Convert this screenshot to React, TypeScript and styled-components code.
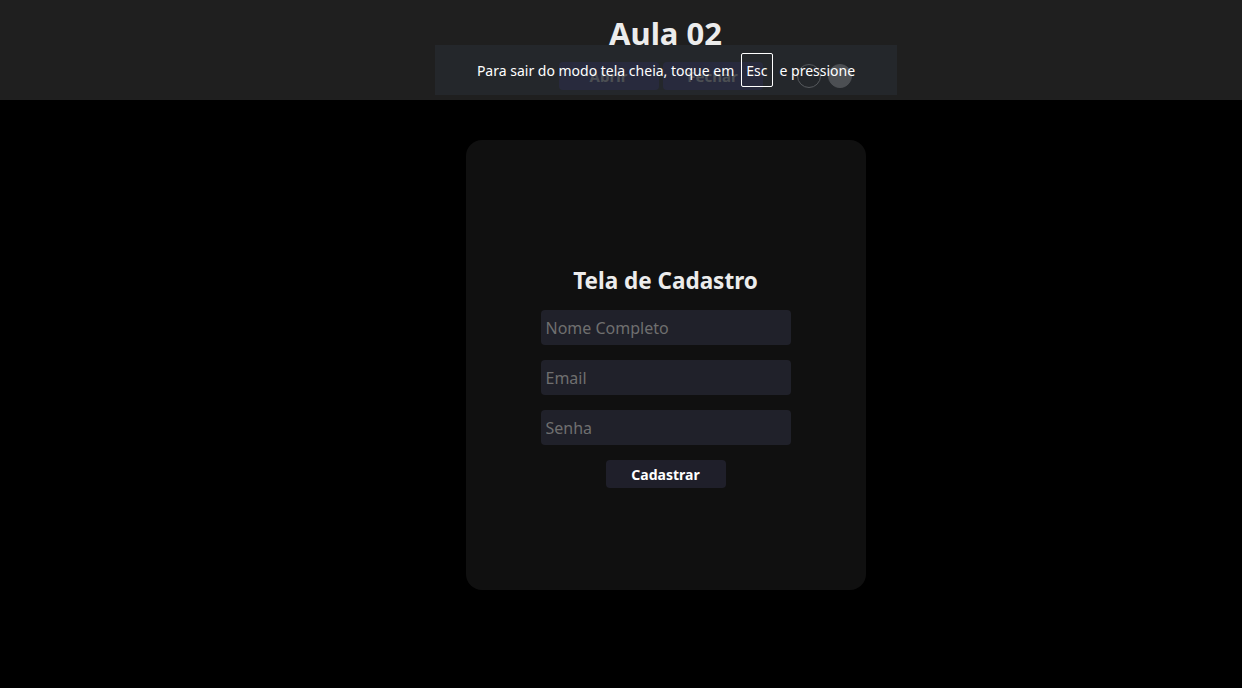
import styled, { createGlobalStyle } from 'styled-components'

const GlobalStyle = createGlobalStyle`
	html, body {
		margin: 0;
		padding: 0;
		background: #000;
		font-family: 'Noto Sans', 'Open Sans', sans-serif;
	}
	* {
		box-sizing: border-box;
	}
`

const Page = styled.div`
	position: relative;
	width: 1242px;
	height: 688px;
	overflow: hidden;
	background: #000;
`

const Header = styled.header`
	height: 100px;
	background: #1f1f1f;
	display: flex;
	flex-direction: column;
	align-items: center;
	padding-left: 89px;
	padding-top: 12px;
`

const Title = styled.h1`
	margin: 0;
	font-size: 31px;
	line-height: 42px;
	font-weight: 700;
	color: #ececec;
`

const Controls = styled.div`
	display: flex;
	align-items: center;
	gap: 4px;
	margin-top: 8px;
	margin-left: 79px;
`

const HeaderButton = styled.button`
	width: 100px;
	height: 28px;
	border: none;
	border-radius: 4px;
	background: #2c2a66;
	color: #bcbcbc;
	font-family: inherit;
	font-size: 15px;
	font-weight: 700;
`

const Circle = styled.span<{ $filled?: boolean }>`
	width: 24px;
	height: 24px;
	border-radius: 50%;
	margin-left: ${(p) => (p.$filled ? '3px' : '30px')};
	border: 1px solid ${(p) => (p.$filled ? '#bcbcbc' : '#e0e0e0')};
	background: ${(p) => (p.$filled ? '#bcbcbc' : 'transparent')};
`

const Main = styled.main`
	display: flex;
	justify-content: center;
	padding-left: 89px;
	padding-top: 40px;
`

const Card = styled.section`
	width: 400px;
	height: 450px;
	border-radius: 16px;
	background: #101010;
	display: flex;
	flex-direction: column;
	align-items: center;
	padding-top: 126px;
`

const CardTitle = styled.h2`
	margin: 0 0 14px;
	font-size: 22.5px;
	line-height: 30px;
	font-weight: 700;
	color: #ececec;
`

const Form = styled.form`
	display: flex;
	flex-direction: column;
	align-items: center;
	gap: 15px;
`

const Field = styled.input`
	width: 250px;
	height: 35px;
	border: none;
	border-radius: 4px;
	background: #20212a;
	color: #ddd;
	padding: 0 5px;
	font-family: inherit;
	font-size: 16px;
	outline: none;
	&::placeholder {
		color: #6f6f6f;
	}
`

const SubmitButton = styled.button`
	width: 120px;
	height: 28px;
	border: none;
	border-radius: 4px;
	background: #1f1f2a;
	color: #fff;
	font-family: inherit;
	font-size: 14px;
	font-weight: 700;
`

const FullscreenNotice = styled.div`
	position: absolute;
	left: 435px;
	top: 45px;
	width: 462px;
	height: 50px;
	background: rgba(39, 43, 48, 0.75);
	color: #fff;
	font-size: 14px;
	display: flex;
	align-items: center;
	justify-content: center;
	gap: 7px;
`

const Key = styled.span`
	border: 1px solid #fff;
	border-radius: 2px;
	padding: 0 4px;
	height: 34px;
	display: flex;
	align-items: center;
`

export default function App() {
	return (
		<Page>
			<GlobalStyle />
			<Header>
				<Title>Aula 02</Title>
				<Controls>
					<HeaderButton>Abrir</HeaderButton>
					<HeaderButton>Fechar</HeaderButton>
					<Circle />
					<Circle $filled />
				</Controls>
			</Header>
			<Main>
				<Card>
					<CardTitle>Tela de Cadastro</CardTitle>
					<Form onSubmit={(e) => e.preventDefault()}>
						<Field type='text' placeholder='Nome Completo' />
						<Field type='email' placeholder='Email' />
						<Field type='password' placeholder='Senha' />
						<SubmitButton type='submit'>Cadastrar</SubmitButton>
					</Form>
				</Card>
			</Main>
			<FullscreenNotice>
				Para sair do modo tela cheia, toque em <Key>Esc</Key> e pressione
			</FullscreenNotice>
		</Page>
	)
}
